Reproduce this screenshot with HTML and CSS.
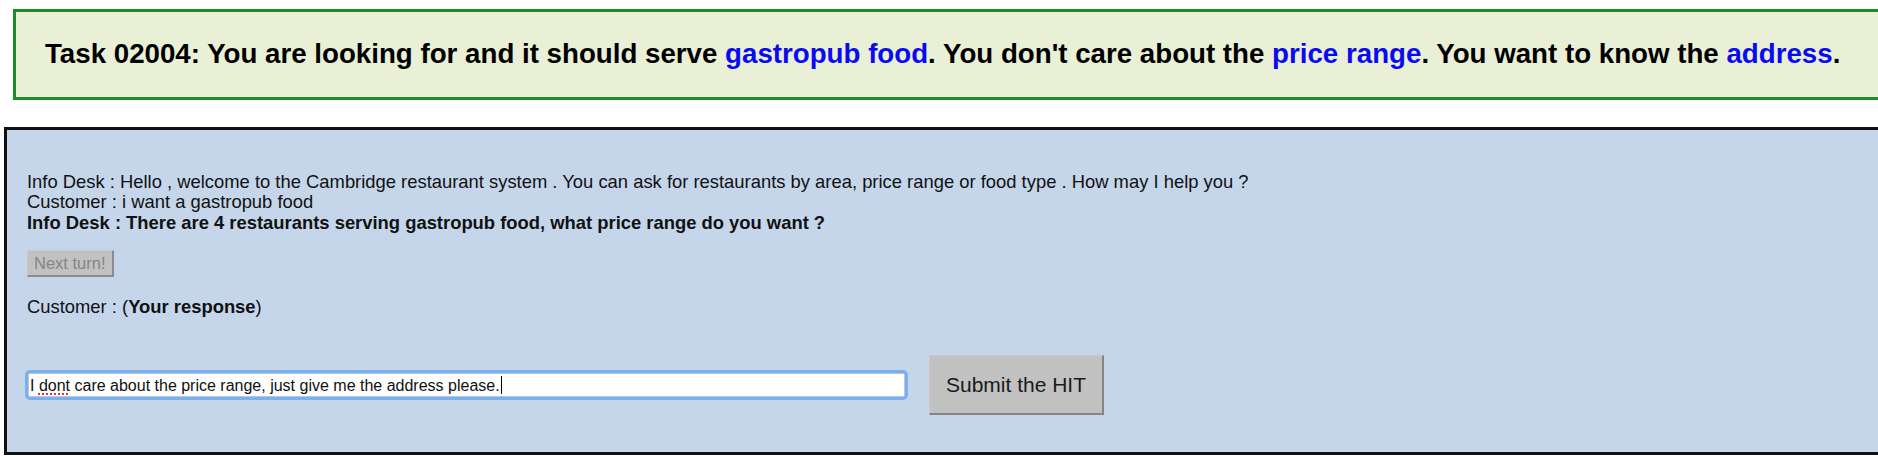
FILE: index.html
```html
<!DOCTYPE html>
<html>
<head>
<meta charset="utf-8">
<title>Task 02004</title>
<link rel="stylesheet" href="styles.css">
</head>
<body>
<div class="task">Task 02004: You are looking for and it should serve <span class="hl">gastropub food</span>. You don't care about the <span class="hl">price range</span>. You want to know the <span class="hl">address</span>.</div>
<div class="dialog">
  <div class="turns">
    <div class="turn">Info Desk : Hello , welcome to the Cambridge restaurant system . You can ask for restaurants by area, price range or food type . How may I help you ?</div>
    <div class="turn">Customer : i want a gastropub food</div>
    <div class="turn strong">Info Desk : There are 4 restaurants serving gastropub food, what price range do you want ?</div>
  </div>
  <button class="next" type="button" disabled>Next turn!</button>
  <div class="prompt">Customer : (<b>Your response</b>)</div>
  <div class="answer-row">
    <div class="response"><span class="text">I <span class="typo">dont</span> care about the price range, just give me the address please.</span><span class="caret"></span></div>
    <button class="submit" type="button">Submit the HIT</button>
  </div>
</div>
</body>
</html>
```
FILE: styles.css
```css
html, body {
  margin: 0;
  padding: 0;
  overflow: hidden;
  background: #ffffff;
}
body {
  font-family: "Liberation Sans", Arial, Helvetica, sans-serif;
  color: #111;
}
.task {
  margin: 9px -60px 0 13px;
  border: 3px solid #1d8a2c;
  background: #e9f0d5;
  padding: 27px 0 28px 29px;
  font-size: 27.7px;
  line-height: 30px;
  font-weight: bold;
  color: #000;
  white-space: nowrap;
}
.hl {
  color: #0a0af2;
}
.dialog {
  margin: 27px -60px 0 4px;
  border: 3px solid #111;
  background: #c5d6eb;
  padding: 42px 0 37px 20px;
  box-sizing: border-box;
  height: 328px;
  display: flex;
  flex-direction: column;
  align-items: flex-start;
}
.turns {
  font-size: 18.4px;
  line-height: 20.4px;
}
.strong {
  font-weight: bold;
}
.next {
  margin-top: 17px;
  height: 27px;
  padding: 0 6px;
  font-family: "Liberation Sans", Arial, sans-serif;
  font-size: 16.5px;
  color: #858585;
  background: #c1c1c1;
  border: 1px solid #c9c9c9;
  border-right: 2px solid #8c8c8c;
  border-bottom: 2px solid #8c8c8c;
}
.prompt {
  margin-top: 19px;
  font-size: 18.4px;
  line-height: 21px;
}
.answer-row {
  margin-top: auto;
  display: flex;
  align-items: center;
  gap: 24px;
  margin-left: 1px;
}
.response {
  width: 877px;
  height: 24px;
  box-sizing: border-box;
  background: #fff;
  border: 1px solid #b9c8d8;
  border-radius: 2px;
  box-shadow: 0 0 0 3px #79b0f0;
  font-size: 16px;
  line-height: 21px;
  padding-left: 1px;
  display: flex;
  align-items: center;
  white-space: nowrap;
  color: #111;
}
.typo {
  text-decoration: underline dotted #e03030;
  text-decoration-thickness: 2px;
  text-underline-offset: 3px;
}
.caret {
  display: inline-block;
  width: 1px;
  height: 18px;
  background: #000;
  margin-left: 1px;
}
.submit {
  height: 60px;
  width: 175px;
  font-family: "Liberation Sans", Arial, sans-serif;
  font-size: 21px;
  color: #1a1a1a;
  background: #c1c1c1;
  border: 1px solid #c9c9c9;
  border-right: 2px solid #858585;
  border-bottom: 2px solid #858585;
  padding: 0;
}
```
